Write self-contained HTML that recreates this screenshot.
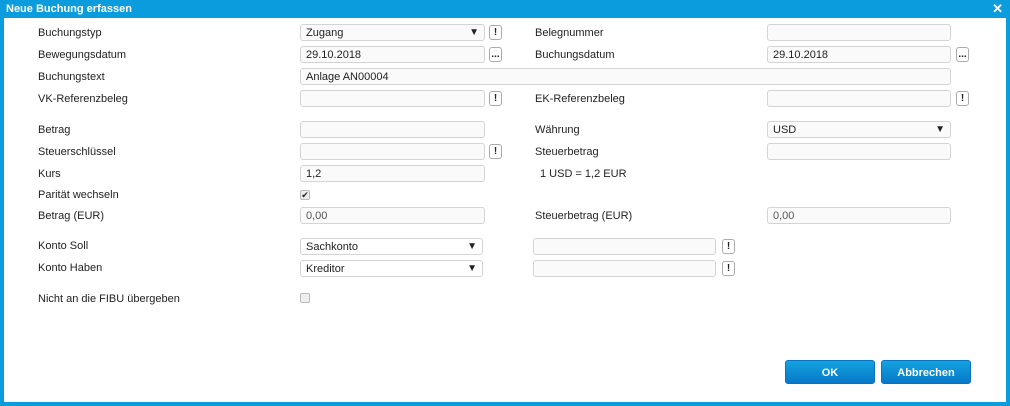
<!DOCTYPE html><html><head><style>
*{box-sizing:border-box;margin:0;padding:0}
body{width:1010px;height:406px;background:#0a9cdc;font-family:"Liberation Sans",Arial,sans-serif;font-size:11px;color:#222;position:relative;overflow:hidden}
.t{position:absolute;left:0;top:0;width:1010px;height:18px;color:#fff;font-weight:bold;font-size:11px;line-height:18px;padding-left:6px}
.x{position:absolute;right:7px;top:0;color:#fff;font-weight:bold;font-size:13px;line-height:17px}
.c{position:absolute;left:4px;top:18px;width:1002px;height:384px;background:#fff}
.w{position:absolute;left:0;top:0;width:1010px;height:406px}
.l{position:absolute;line-height:14px;white-space:nowrap}
.i{position:absolute;height:17px;border:1px solid #d4d4d4;border-radius:3px;background:#fafafa;padding-left:5px;line-height:16px;white-space:nowrap}
.b{position:absolute;width:13px;height:15px;border:1px solid #aaa;border-radius:3px;background:#fff;font-weight:bold;font-size:10px;text-align:center;line-height:13px}
.s::after{content:"▼";position:absolute;right:5px;top:0;font-size:10px}
.cb{position:absolute;width:10px;height:10px;border:1px solid #bbb;border-radius:2px;background:#eee;font-size:9px;line-height:8px;text-align:center}
.btn{position:absolute;height:24px;border-radius:3px;background:linear-gradient(#14a3e0,#0878c8);color:#fff;font-weight:bold;text-align:center;line-height:24px;border:1px solid #0a72bf}
</style></head><body>
<div class="t">Neue Buchung erfassen</div><div class="x">✕</div>
<div class="c"></div>
<div class="w">
<div class="l" style="left:38px;top:26px">Buchungstyp</div>
<div class="i s" style="left:300px;top:24px;width:185px">Zugang</div><div class="b" style="left:489px;top:25px">!</div>
<div class="l" style="left:535px;top:26px">Belegnummer</div>
<div class="i" style="left:767px;top:24px;width:184px"></div>

<div class="l" style="left:38px;top:48px">Bewegungsdatum</div>
<div class="i" style="left:300px;top:46px;width:185px">29.10.2018</div><div class="b" style="left:489px;top:47px">...</div>
<div class="l" style="left:535px;top:48px">Buchungsdatum</div>
<div class="i" style="left:767px;top:46px;width:184px">29.10.2018</div><div class="b" style="left:956px;top:47px">...</div>

<div class="l" style="left:38px;top:70px">Buchungstext</div>
<div class="i" style="left:300px;top:68px;width:651px">Anlage AN00004</div>

<div class="l" style="left:38px;top:92px">VK-Referenzbeleg</div>
<div class="i" style="left:300px;top:90px;width:185px"></div><div class="b" style="left:489px;top:91px">!</div>
<div class="l" style="left:535px;top:92px">EK-Referenzbeleg</div>
<div class="i" style="left:767px;top:90px;width:184px"></div><div class="b" style="left:956px;top:91px">!</div>

<div class="l" style="left:38px;top:123px">Betrag</div>
<div class="i" style="left:300px;top:121px;width:185px"></div>
<div class="l" style="left:535px;top:123px">Währung</div>
<div class="i s" style="left:767px;top:121px;width:184px">USD</div>

<div class="l" style="left:38px;top:145px">Steuerschlüssel</div>
<div class="i" style="left:300px;top:143px;width:185px"></div><div class="b" style="left:489px;top:144px">!</div>
<div class="l" style="left:535px;top:145px">Steuerbetrag</div>
<div class="i" style="left:767px;top:143px;width:184px"></div>

<div class="l" style="left:38px;top:167px">Kurs</div>
<div class="i" style="left:300px;top:165px;width:185px">1,2</div>
<div class="l" style="left:540px;top:167px">1 USD = 1,2 EUR</div>

<div class="l" style="left:38px;top:188px">Parität wechseln</div>
<div class="cb" style="left:300px;top:190px">✔</div>

<div class="l" style="left:38px;top:209px">Betrag (EUR)</div>
<div class="i" style="left:300px;top:207px;width:185px;color:#555">0,00</div>
<div class="l" style="left:535px;top:209px">Steuerbetrag (EUR)</div>
<div class="i" style="left:767px;top:207px;width:184px;color:#555">0,00</div>

<div class="l" style="left:38px;top:239px">Konto Soll</div>
<div class="i s" style="left:300px;top:238px;width:183px;background:#fff">Sachkonto</div>
<div class="i" style="left:533px;top:238px;width:183px"></div><div class="b" style="left:722px;top:239px">!</div>

<div class="l" style="left:38px;top:261px">Konto Haben</div>
<div class="i s" style="left:300px;top:260px;width:183px;background:#fff">Kreditor</div>
<div class="i" style="left:533px;top:260px;width:183px"></div><div class="b" style="left:722px;top:261px">!</div>

<div class="l" style="left:38px;top:292px">Nicht an die FIBU übergeben</div>
<div class="cb" style="left:300px;top:293px"></div>

<div class="btn" style="left:785px;top:360px;width:90px">OK</div>
<div class="btn" style="left:881px;top:360px;width:90px">Abbrechen</div>
</div>
</body></html>
